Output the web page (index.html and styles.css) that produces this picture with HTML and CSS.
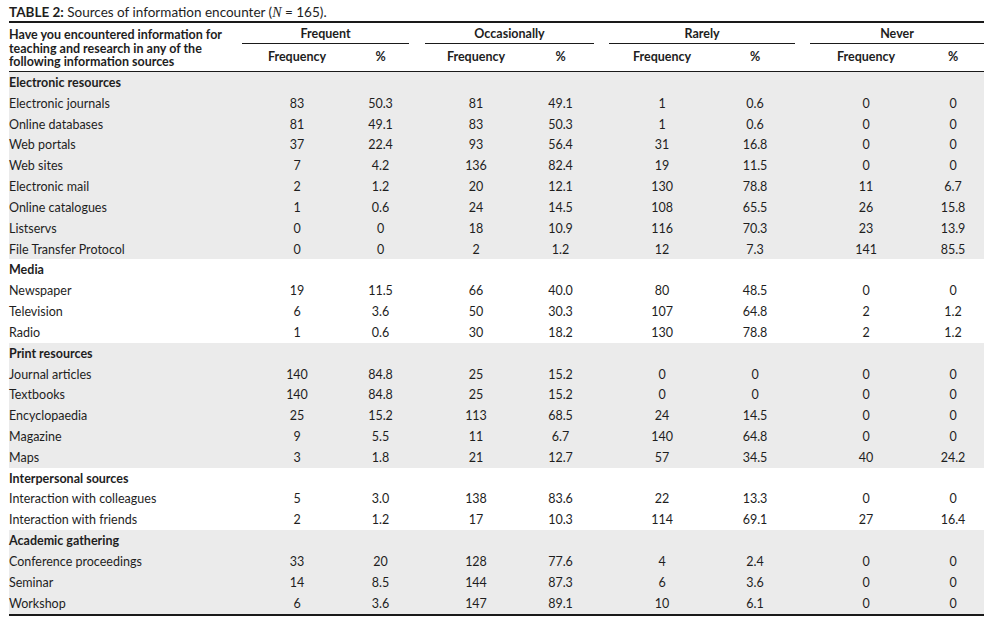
FILE: index.html
```html
<!DOCTYPE html>
<html lang="en">
<head>
<meta charset="utf-8">
<title>Table 2</title>
<link rel="stylesheet" href="styles.css">
</head>
<body>
<div class="page">
  <p class="caption"><b>TABLE 2:</b> Sources of information encounter (<i class="math">N</i> = 165).</p>
  <table class="data">
    <colgroup>
      <col class="c-label">
      <col class="c1a"><col class="c1b"><col class="c-gap1">
      <col class="c2a"><col class="c2b"><col class="c-gap">
      <col class="c3a"><col class="c3b"><col class="c-gap">
      <col class="c4a"><col class="c4b">
    </colgroup>
    <thead>
      <tr class="h1">
        <th rowspan="2" class="label-head">Have you encountered information for<br>teaching and research in any of the<br>following information sources</th>
        <th colspan="2" class="group">Frequent</th><th></th>
        <th colspan="2" class="group">Occasionally</th><th></th>
        <th colspan="2" class="group">Rarely</th><th></th>
        <th colspan="2" class="group">Never</th>
      </tr>
      <tr class="h2">
        <th>Frequency</th><th>%</th><th></th>
        <th>Frequency</th><th>%</th><th></th>
        <th>Frequency</th><th>%</th><th></th>
        <th>Frequency</th><th>%</th>
      </tr>
    </thead>
    <tbody class="shade">
      <tr class="sec"><td colspan="12">Electronic resources</td></tr>
      <tr><td>Electronic journals</td><td>83</td><td>50.3</td><td></td><td>81</td><td>49.1</td><td></td><td>1</td><td>0.6</td><td></td><td>0</td><td>0</td></tr>
      <tr><td>Online databases</td><td>81</td><td>49.1</td><td></td><td>83</td><td>50.3</td><td></td><td>1</td><td>0.6</td><td></td><td>0</td><td>0</td></tr>
      <tr><td>Web portals</td><td>37</td><td>22.4</td><td></td><td>93</td><td>56.4</td><td></td><td>31</td><td>16.8</td><td></td><td>0</td><td>0</td></tr>
      <tr><td>Web sites</td><td>7</td><td>4.2</td><td></td><td>136</td><td>82.4</td><td></td><td>19</td><td>11.5</td><td></td><td>0</td><td>0</td></tr>
      <tr><td>Electronic mail</td><td>2</td><td>1.2</td><td></td><td>20</td><td>12.1</td><td></td><td>130</td><td>78.8</td><td></td><td>11</td><td>6.7</td></tr>
      <tr><td>Online catalogues</td><td>1</td><td>0.6</td><td></td><td>24</td><td>14.5</td><td></td><td>108</td><td>65.5</td><td></td><td>26</td><td>15.8</td></tr>
      <tr><td>Listservs</td><td>0</td><td>0</td><td></td><td>18</td><td>10.9</td><td></td><td>116</td><td>70.3</td><td></td><td>23</td><td>13.9</td></tr>
      <tr><td>File Transfer Protocol</td><td>0</td><td>0</td><td></td><td>2</td><td>1.2</td><td></td><td>12</td><td>7.3</td><td></td><td>141</td><td>85.5</td></tr>
    </tbody>
    <tbody>
      <tr class="sec"><td colspan="12">Media</td></tr>
      <tr><td>Newspaper</td><td>19</td><td>11.5</td><td></td><td>66</td><td>40.0</td><td></td><td>80</td><td>48.5</td><td></td><td>0</td><td>0</td></tr>
      <tr><td>Television</td><td>6</td><td>3.6</td><td></td><td>50</td><td>30.3</td><td></td><td>107</td><td>64.8</td><td></td><td>2</td><td>1.2</td></tr>
      <tr><td>Radio</td><td>1</td><td>0.6</td><td></td><td>30</td><td>18.2</td><td></td><td>130</td><td>78.8</td><td></td><td>2</td><td>1.2</td></tr>
    </tbody>
    <tbody class="shade">
      <tr class="sec"><td colspan="12">Print resources</td></tr>
      <tr><td>Journal articles</td><td>140</td><td>84.8</td><td></td><td>25</td><td>15.2</td><td></td><td>0</td><td>0</td><td></td><td>0</td><td>0</td></tr>
      <tr><td>Textbooks</td><td>140</td><td>84.8</td><td></td><td>25</td><td>15.2</td><td></td><td>0</td><td>0</td><td></td><td>0</td><td>0</td></tr>
      <tr><td>Encyclopaedia</td><td>25</td><td>15.2</td><td></td><td>113</td><td>68.5</td><td></td><td>24</td><td>14.5</td><td></td><td>0</td><td>0</td></tr>
      <tr><td>Magazine</td><td>9</td><td>5.5</td><td></td><td>11</td><td>6.7</td><td></td><td>140</td><td>64.8</td><td></td><td>0</td><td>0</td></tr>
      <tr><td>Maps</td><td>3</td><td>1.8</td><td></td><td>21</td><td>12.7</td><td></td><td>57</td><td>34.5</td><td></td><td>40</td><td>24.2</td></tr>
    </tbody>
    <tbody>
      <tr class="sec"><td colspan="12">Interpersonal sources</td></tr>
      <tr><td>Interaction with colleagues</td><td>5</td><td>3.0</td><td></td><td>138</td><td>83.6</td><td></td><td>22</td><td>13.3</td><td></td><td>0</td><td>0</td></tr>
      <tr><td>Interaction with friends</td><td>2</td><td>1.2</td><td></td><td>17</td><td>10.3</td><td></td><td>114</td><td>69.1</td><td></td><td>27</td><td>16.4</td></tr>
    </tbody>
    <tbody class="shade last">
      <tr class="sec"><td colspan="12">Academic gathering</td></tr>
      <tr><td>Conference proceedings</td><td>33</td><td>20</td><td></td><td>128</td><td>77.6</td><td></td><td>4</td><td>2.4</td><td></td><td>0</td><td>0</td></tr>
      <tr><td>Seminar</td><td>14</td><td>8.5</td><td></td><td>144</td><td>87.3</td><td></td><td>6</td><td>3.6</td><td></td><td>0</td><td>0</td></tr>
      <tr><td>Workshop</td><td>6</td><td>3.6</td><td></td><td>147</td><td>89.1</td><td></td><td>10</td><td>6.1</td><td></td><td>0</td><td>0</td></tr>
    </tbody>
  </table>
</div>
</body>
</html>
```

FILE: styles.css
```css
html, body {
  margin: 0;
  padding: 0;
  background: #ffffff;
}

.page {
  padding: 4px 7px 0 9px;
  font-family: "Lato", "Open Sans", sans-serif;
  color: #1e1e1e;
}

.caption {
  margin: 0;
  font-size: 13.5px;
  line-height: 16px;
  height: 17px;
}

.caption .math {
  font-family: "Liberation Serif", serif;
  font-style: italic;
  font-size: 14px;
}

.data {
  width: 975px;
  border-collapse: collapse;
  table-layout: fixed;
  font-size: 12.5px;
  border-top: 2px solid #1a1a1a;
  border-bottom: 2px solid #1a1a1a;
}

.c-label { width: 233px; }
.c1a { width: 110px; }
.c1b { width: 57px; }
.c-gap1 { width: 16px; }
.c2a { width: 102px; }
.c2b { width: 67px; }
.c-gap { width: 15px; }
.c3a { width: 106px; }
.c3b { width: 80px; }
.c4a { width: 112px; }
.c4b { width: 62px; }

.data th {
  padding: 0;
  font-weight: 700;
  text-align: center;
}

.data thead .h1 th {
  height: 20px;
  vertical-align: middle;
}

.data thead .h1 th.group {
  border-bottom: 1px solid #1a1a1a;
}

.data thead .h2 th {
  height: 25px;
  vertical-align: middle;
  padding-bottom: 2px;
  border-bottom: 1px solid #1a1a1a;
}

.data th.label-head {
  text-align: left;
  vertical-align: top;
  line-height: 13.5px;
  padding-top: 3px;
  border-bottom: 1px solid #1a1a1a;
}

.data td {
  padding: 0;
  height: 20.84px;
  text-align: center;
  vertical-align: middle;
  white-space: nowrap;
}

.data td:first-child {
  text-align: left;
}

.data tr.sec td {
  font-weight: 700;
  text-align: left;
}

.data tbody.shade {
  background: #ebebeb;
}
```
